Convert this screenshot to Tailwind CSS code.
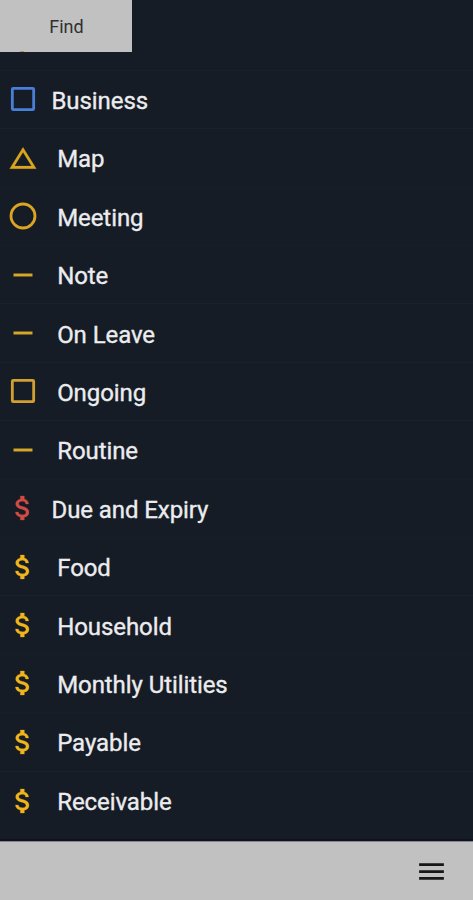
<!DOCTYPE html>
<html lang="en">
<head>
<meta charset="utf-8">
<title>Categories</title>
<script src="https://cdn.jsdelivr.net/npm/@tailwindcss/browser@4"></script>
</head>
<body class="h-[900px] w-[473px] overflow-hidden bg-[#151c25] font-[Roboto,sans-serif]">
<svg class="hidden">
  <symbol id="square" viewBox="0 0 24 24"><rect x="4" y="4" width="16" height="16" rx=".7" fill="none" stroke="currentColor" stroke-width="2.1"/></symbol>
  <symbol id="triangle" viewBox="0 0 24 24"><path d="M12 7.77 18.39 18H5.61L12 7.77M12 4L2 20h20L12 4z" stroke="currentColor" stroke-width=".15"/></symbol>
  <symbol id="circle" viewBox="0 0 24 24"><circle cx="12" cy="12" r="9" fill="none" stroke="currentColor" stroke-width="2.1"/></symbol>
  <symbol id="dash" viewBox="0 0 24 24"><path d="M19 13H5v-2h14v2z" stroke="currentColor" stroke-width=".2"/></symbol>
  <symbol id="dollar" viewBox="0 0 24 24"><path d="M11.8 10.9c-2.27-.59-3-1.2-3-2.15 0-1.09 1.01-1.85 2.7-1.85 1.78 0 2.44.85 2.5 2.1h2.21c-.07-1.72-1.12-3.3-3.21-3.81V3h-3v2.16c-1.94.42-3.5 1.68-3.5 3.61 0 2.31 1.91 3.46 4.7 4.13 2.5.6 3 1.48 3 2.41 0 .69-.49 1.79-2.7 1.79-2.06 0-2.87-.92-2.98-2.1h-2.2c.12 2.19 1.76 3.42 3.68 3.83V21h3v-2.15c1.95-.37 3.5-1.5 3.5-3.55 0-2.84-2.43-3.81-4.7-4.4z" stroke="currentColor" stroke-width=".2"/></symbol>
</svg>
<div class="flex h-full flex-col">
  <header class="h-[70.7px] shrink-0 border-b border-[#19212a]">
    <div class="relative flex h-[52px] w-[132px] items-center justify-center bg-[#c1c1c1] pl-[1px] text-[18px] text-[#303030]">Find
      <span class="absolute bottom-0 left-[20px] h-px w-[4px] bg-[#a79a62]"></span>
    </div>
  </header>
  <main class="flex-1 text-[24px] tracking-[-0.08px] text-[#ececef] [&_span]:[-webkit-text-stroke:0.35px_#ececef]">
    <ul>
      <li class="flex h-[58.42px] items-center border-b border-[#19212a] pl-[6.7px]"><svg class="size-8 fill-current text-[#4a7fd8]"><use href="#square"/></svg><span class="pt-[3px] pl-[12.8px]">Business</span></li>
      <li class="flex h-[58.42px] items-center border-b border-[#171e27] pl-[6.7px]"><svg class="size-8 fill-current text-[#dba520]"><use href="#triangle"/></svg><span class="pt-[3px] pl-[18.5px]">Map</span></li>
      <li class="flex h-[58.42px] items-center border-b border-[#171e27] pl-[6.7px]"><svg class="size-8 fill-current text-[#dba520]"><use href="#circle"/></svg><span class="pt-[3px] pl-[18.5px]">Meeting</span></li>
      <li class="flex h-[58.42px] items-center border-b border-[#19212a] pl-[6.7px]"><svg class="size-8 fill-current text-[#d8a62c]"><use href="#dash"/></svg><span class="pt-[3px] pl-[18.5px]">Note</span></li>
      <li class="flex h-[58.42px] items-center border-b border-[#19212a] pl-[6.7px]"><svg class="size-8 fill-current text-[#d8a62c]"><use href="#dash"/></svg><span class="pt-[3px] pl-[18.5px]">On Leave</span></li>
      <li class="flex h-[58.42px] items-center border-b border-[#19212a] pl-[6.7px]"><svg class="size-8 fill-current text-[#d2a031]"><use href="#square"/></svg><span class="pt-[3px] pl-[18.5px]">Ongoing</span></li>
      <li class="flex h-[58.42px] items-center border-b border-[#171e27] pl-[6.7px]"><svg class="size-8 fill-current text-[#d8a62c]"><use href="#dash"/></svg><span class="pt-[3px] pl-[18.5px]">Routine</span></li>
      <li class="flex h-[58.42px] items-center border-b border-[#171e27] pl-[6.7px]"><svg class="size-8 fill-current text-[#d14b45]"><use href="#dollar"/></svg><span class="pt-[3px] pl-[12.8px]">Due and Expiry</span></li>
      <li class="flex h-[58.42px] items-center border-b border-[#19212a] pl-[6.7px]"><svg class="size-8 fill-current text-[#f0b41c]"><use href="#dollar"/></svg><span class="pt-[3px] pl-[18.5px]">Food</span></li>
      <li class="flex h-[58.42px] items-center border-b border-[#171e27] pl-[6.7px]"><svg class="size-8 fill-current text-[#f0b41c]"><use href="#dollar"/></svg><span class="pt-[3px] pl-[18.5px]">Household</span></li>
      <li class="flex h-[58.42px] items-center border-b border-[#171e27] pl-[6.7px]"><svg class="size-8 fill-current text-[#f0b41c]"><use href="#dollar"/></svg><span class="pt-[3px] pl-[18.5px]">Monthly Utilities</span></li>
      <li class="flex h-[58.42px] items-center border-b border-[#19212a] pl-[6.7px]"><svg class="size-8 fill-current text-[#f0b41c]"><use href="#dollar"/></svg><span class="pt-[3px] pl-[18.5px]">Payable</span></li>
      <li class="flex h-[58.42px] items-center pl-[6.7px]"><svg class="size-8 fill-current text-[#f0b41c]"><use href="#dollar"/></svg><span class="pt-[3px] pl-[18.5px]">Receivable</span></li>
    </ul>
  </main>
  <footer class="flex h-[59px] shrink-0 items-center justify-end border-t border-[#85858f] bg-[#c1c1c1] pr-[25.3px] shadow-[0_-2px_0_#10121f]">
    <svg class="size-[33px] fill-[#161616]" viewBox="0 0 24 24"><path d="M3 18h18v-2H3v2zm0-5h18v-2H3v2zm0-7v2h18V6H3z"/></svg>
  </footer>
</div>
</body>
</html>
